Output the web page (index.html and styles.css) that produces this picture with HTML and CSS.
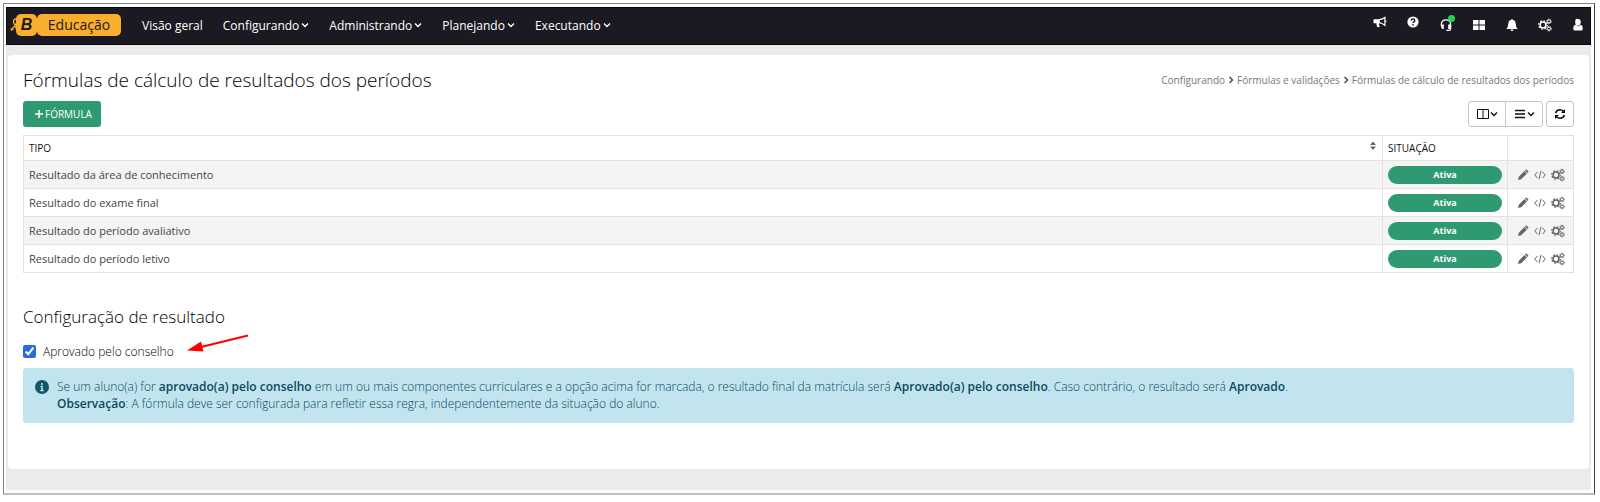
FILE: index.html
```
<!DOCTYPE html>
<html lang="pt-BR">
<head>
  <meta charset="utf-8">
  <title>Fórmulas de cálculo de resultados dos períodos</title>
  <link rel="stylesheet" href="styles.css">
</head>
<body>
  <!-- shared icons -->
  <svg class="sprite" aria-hidden="true">
    <symbol id="chevron" viewBox="0 0 8 8"><path d="M1 2.500l3 3 3-3" fill="none" stroke="currentColor" stroke-width="1.400"/></symbol>
    <symbol id="crumb" viewBox="0 0 8 8"><path d="M2.500 1l3 3-3 3" fill="none" stroke="currentColor" stroke-width="1.400"/></symbol>
    <symbol id="pencil" viewBox="0 0 12 12"><path d="M1 11l.8-3.200 5.700-5.700 2.400 2.400-5.700 5.700zM8 1.600l.8-.8q.5-.4 1 0l1.400 1.400q.4.500 0 1l-.8.800z" fill="currentColor"/></symbol>
    <symbol id="code" viewBox="0 0 12 12"><path d="M3.400 3L.7 6l2.700 3M8.600 3l2.700 3-2.700 3M7 1.800l-2 8.400" fill="none" stroke="currentColor"/></symbol>
    <symbol id="gears" viewBox="0 0 14 14">
      <g fill="none" stroke="currentColor">
        <circle cx="5" cy="7" r="2.900" stroke-width="1.500"/>
        <circle cx="5" cy="7" r="4.200" stroke-width="1.300" stroke-dasharray="1.600 1.700"/>
        <circle cx="11" cy="3.400" r="1.500"/>
        <circle cx="11" cy="3.400" r="2.300" stroke-dasharray="1 .8"/>
        <circle cx="11" cy="10.600" r="1.500"/>
        <circle cx="11" cy="10.600" r="2.300" stroke-dasharray="1 .8"/>
      </g>
    </symbol>
  </svg>

  <div class="frame">
    <header class="topbar">
      <a class="brand" href="#" aria-label="B Educação">
        <svg class="brand-ribbon" viewBox="0 0 10 14"><path d="M1 12.500L7.500 4Q8.600 1 6 1T3.500 4L7 12.500M.8 10.500l2.700 1.500" fill="none" stroke="#f9ae2c" stroke-width="1.300"/></svg>
        <span class="brand-letter">B</span>
        <span class="brand-name">Educação</span>
      </a>
      <nav class="menu">
        <a href="#">Visão geral</a>
        <a href="#">Configurando <svg class="icon-xs"><use href="#chevron"/></svg></a>
        <a href="#">Administrando <svg class="icon-xs"><use href="#chevron"/></svg></a>
        <a href="#">Planejando <svg class="icon-xs"><use href="#chevron"/></svg></a>
        <a href="#">Executando <svg class="icon-xs"><use href="#chevron"/></svg></a>
      </nav>
      <div class="tools">
        <button class="raised" aria-label="Novidades"><svg viewBox="0 0 14 14"><path d="M1.300 4.200h4.600Q9.500 4 12.500 1.300v10.200Q9.300 8.600 6 8.300q-.5 1.400.8 2.900-.3 1.200-2.400 1Q3.100 10 3.500 8.300H1.300Q.5 8.200.5 7.400V5q0-.8.8-.8z" fill="currentColor"/><path d="M6.800 5.200Q9.200 5 11.300 3.400v5.900Q9.200 7.700 6.800 7.300z" fill="#1b1a22"/><path d="M12.400 5.200q1.100.2 1.100 1.100t-1.100 1.100z" fill="currentColor"/></svg></button>
        <button class="raised" aria-label="Ajuda"><svg viewBox="0 0 14 14"><circle cx="7" cy="7" r="5.600" fill="currentColor"/><path d="M5.200 5.600Q5.300 4 7 4t1.800 1.500Q8.800 6.400 7.600 7 7 7.400 7 8.100M7 9v1.400" fill="none" stroke="#1b1a22" stroke-width="1.400"/></svg></button>
        <button class="support" aria-label="Suporte"><svg viewBox="0 0 14 16"><path d="M1.700 9V7Q2 2.200 7 2.200T12.300 7v5.200q0 2-2 2H7.500" fill="none" stroke="currentColor" stroke-width="1.400"/><path d="M2 7.500h2.500v5H3.200Q1.500 12.300 1.300 10zM9.500 7.500h2.700v5H9.500z" fill="currentColor"/></svg><span class="online"></span></button>
        <button aria-label="Aplicativos"><svg viewBox="0 0 14 14"><path d="M1 2h5.500v4.500H1zM7.500 2H13v4.500H7.500zM1 7.500h5.500V12H1zM7.500 7.500H13V12H7.500z" fill="currentColor"/></svg></button>
        <button aria-label="Notificações"><svg viewBox="0 0 14 14"><path d="M6.300 1.800q0-.9.700-.9t.7.900Q10.600 2.300 10.700 6q.1 3.300 2 5H1.300q1.900-1.700 2-5 .1-3.700 3-4.200zM5.400 11.500h3.200Q8.300 13 7 13t-1.600-1.500z" fill="currentColor"/></svg></button>
        <button aria-label="Configurações"><svg><use href="#gears"/></svg></button>
        <button aria-label="Usuário"><svg viewBox="0 0 14 14"><path d="M7 1q2.800 0 2.800 3T7 7.600 4.200 4 7 1zM4.300 6.800Q7 9.600 9.700 6.800q2 .5 2 4.200 0 1.500-1.500 1.500H3.800Q2.300 12.500 2.300 11q0-3.700 2-4.200z" fill="currentColor"/></svg></button>
      </div>
    </header>

    <main class="card">
      <div class="page-head">
        <h1>Fórmulas de cálculo de resultados dos períodos</h1>
        <nav class="breadcrumb">
          <a href="#">Configurando</a>
          <svg class="icon-xs"><use href="#crumb"/></svg>
          <a href="#">Fórmulas e validações</a>
          <svg class="icon-xs"><use href="#crumb"/></svg>
          <span>Fórmulas de cálculo de resultados dos períodos</span>
        </nav>
      </div>

      <div class="toolbar">
        <button class="btn-add"><svg viewBox="0 0 10 10"><path d="M5 1v8M1 5h8" stroke="currentColor" stroke-width="1.600"/></svg>FÓRMULA</button>
        <div class="toolbar-right">
          <div class="btn-group">
            <button aria-label="Colunas"><svg class="icon-sm" viewBox="0 0 12 12"><path d="M.5 1.500h11v9H.5zM6 1.500v9" fill="none" stroke="currentColor"/></svg><svg class="icon-xs"><use href="#chevron"/></svg></button>
            <button aria-label="Densidade"><svg class="icon-sm" viewBox="0 0 12 12"><path d="M1 2.500h10M1 6h10M1 9.500h10" stroke="currentColor" stroke-width="1.500"/></svg><svg class="icon-xs"><use href="#chevron"/></svg></button>
          </div>
          <button class="btn-refresh" aria-label="Atualizar"><svg class="icon-sm" viewBox="0 0 12 12"><path d="M1.600 5Q2.500 1.800 6 1.800q2 0 3.400 1.500M10.400 7Q9.500 10.200 6 10.200q-2 0-3.400-1.500" fill="none" stroke="currentColor" stroke-width="1.600"/><path d="M11 1v4H7zM1 11V7h4z" fill="currentColor"/></svg></button>
        </div>
      </div>

      <table class="grid">
        <thead>
          <tr>
            <th class="col-type"><div class="sortable">TIPO <svg viewBox="0 0 8 10"><path d="M4 .5L7 4H1zM4 9L1 5.500h6z" fill="currentColor"/></svg></div></th>
            <th class="col-status">SITUAÇÃO</th>
            <th class="col-actions" aria-label="Ações"></th>
          </tr>
        </thead>
        <tbody>
          <tr>
            <td>Resultado da área de conhecimento</td>
            <td><span class="badge">Ativa</span></td>
            <td><div class="actions"><button aria-label="Editar"><svg><use href="#pencil"/></svg></button><button aria-label="Código"><svg><use href="#code"/></svg></button><button aria-label="Configurar"><svg><use href="#gears"/></svg></button></div></td>
          </tr>
          <tr>
            <td>Resultado do exame final</td>
            <td><span class="badge">Ativa</span></td>
            <td><div class="actions"><button aria-label="Editar"><svg><use href="#pencil"/></svg></button><button aria-label="Código"><svg><use href="#code"/></svg></button><button aria-label="Configurar"><svg><use href="#gears"/></svg></button></div></td>
          </tr>
          <tr>
            <td>Resultado do período avaliativo</td>
            <td><span class="badge">Ativa</span></td>
            <td><div class="actions"><button aria-label="Editar"><svg><use href="#pencil"/></svg></button><button aria-label="Código"><svg><use href="#code"/></svg></button><button aria-label="Configurar"><svg><use href="#gears"/></svg></button></div></td>
          </tr>
          <tr>
            <td>Resultado do período letivo</td>
            <td><span class="badge">Ativa</span></td>
            <td><div class="actions"><button aria-label="Editar"><svg><use href="#pencil"/></svg></button><button aria-label="Código"><svg><use href="#code"/></svg></button><button aria-label="Configurar"><svg><use href="#gears"/></svg></button></div></td>
          </tr>
        </tbody>
      </table>

      <h2>Configuração de resultado</h2>
      <div class="option">
        <input type="checkbox" id="conselho" checked>
        <label for="conselho">Aprovado pelo conselho</label>
        <svg class="arrow" viewBox="0 0 62 20"><path d="M61 1.500L14 13" stroke="#f00" stroke-width="2"/><path d="M0 16.500L14 7.500l2.500 10z" fill="#f00"/></svg>
      </div>

      <div class="notice">
        <svg viewBox="0 0 14 14"><circle cx="7" cy="7" r="7" fill="#13566b"/><path d="M7 3v2M5.500 6.500H7v4M5.300 10.500h3.400" fill="none" stroke="#c1e4ef" stroke-width="1.500"/></svg>
        <p>Se um aluno(a) for <b>aprovado(a) pelo conselho</b> em um ou mais componentes curriculares e a opção acima for marcada, o resultado final da matrícula será <b>Aprovado(a) pelo conselho</b>. Caso contrário, o resultado será <b>Aprovado</b>.<br>
        <b>Observação</b>: A fórmula deve ser configurada para refletir essa regra, independentemente da situação do aluno.</p>
      </div>
    </main>
  </div>
</body>
</html>
```
FILE: styles.css
```
* {
  box-sizing: border-box;
}

body {
  margin: 0;
  padding: 3px 5px 7px 3px;
  font-family: "Open Sans", "Noto Sans", sans-serif;
  font-size: 12px;
  font-weight: 300;
  color: #000;
  background: #fff;
}

button {
  font: inherit;
  color: inherit;
  background: none;
  border: none;
  padding: 0;
  cursor: pointer;
}

a {
  color: inherit;
  text-decoration: none;
}

svg {
  display: block;
  flex: none;
}

.sprite {
  display: none;
}

.icon-xs {
  width: 8px;
  height: 8px;
}

.icon-sm {
  width: 12px;
  height: 12px;
}

.frame {
  border: 1px solid #858585;
  border-right-color: #444;
  border-bottom: 2px solid #bfbfbf;
  padding: 3px 3px 3px 2px;
  background: #ebebeb;
  background-clip: content-box;
}

/* top bar */
.topbar {
  display: flex;
  align-items: center;
  height: 38px;
  padding: 0 5px 2px 3px;
  margin-bottom: 10px;
  background: #1b1a22;
  border: 1px solid #08080c;
  color: #fff;
}

.brand {
  display: flex;
  align-items: center;
  color: #1b1a22;
}

.brand-ribbon {
  width: 10px;
  height: 14px;
  margin-right: -4px;
}

.brand-letter,
.brand-name {
  height: 22px;
  line-height: 22px;
  background: #f9ae2c;
  border-radius: 5px;
  text-align: center;
}

.brand-letter {
  width: 21px;
  font: italic bold 16px/22px "Liberation Sans", sans-serif;
}

.brand-name {
  width: 84px;
  font-size: 14px;
  font-weight: 500;
}

.menu {
  display: flex;
  gap: 20px;
  margin-left: 21px;
  font-size: 12px;
  font-weight: 500;
}

.menu a {
  display: flex;
  align-items: center;
  gap: 2px;
}

.tools {
  display: flex;
  align-items: center;
  gap: 19px;
  margin-left: auto;
}

.tools svg {
  width: 14px;
  height: 14px;
}

.tools .raised {
  padding-bottom: 7px;
}

.support {
  position: relative;
}

.online {
  position: absolute;
  top: -3px;
  right: -2px;
  width: 7px;
  height: 7px;
  border-radius: 50%;
  background: #22d34f;
}

/* content */
.card {
  margin: 0 2px 21px;
  padding: 11px 15px 46px;
  background: #fff;
  border-radius: 4px;
}

.page-head {
  display: flex;
  justify-content: space-between;
  align-items: center;
  height: 28px;
  margin-bottom: 7px;
}

h1,
h2 {
  margin: 0;
  font-weight: 300;
}

h1 {
  font-size: 19px;
}

h2 {
  margin: 32px 0 12px;
  font-size: 17px;
  line-height: 24px;
}

.breadcrumb {
  display: flex;
  align-items: center;
  gap: 2px;
  font-size: 10px;
  font-weight: 400;
  color: #777;
}

.breadcrumb svg {
  color: #444;
}

.toolbar {
  display: flex;
  justify-content: space-between;
  margin-bottom: 8px;
}

.btn-add {
  display: flex;
  align-items: center;
  gap: 1px;
  height: 26px;
  padding: 0 9px 0 11px;
  background: #2f9972;
  border-radius: 3px;
  color: #fff;
  font-size: 10px;
  font-weight: 400;
}

.btn-add svg {
  width: 10px;
  height: 10px;
}

.toolbar-right {
  display: flex;
  gap: 3px;
  color: #111;
}

.btn-group {
  display: flex;
}

.btn-group button,
.btn-refresh {
  display: flex;
  align-items: center;
  justify-content: center;
  gap: 1px;
  width: 38px;
  height: 26px;
  border: 1px solid #c4c4c4;
}

.btn-group button:first-child {
  border-radius: 3px 0 0 3px;
}

.btn-group button:last-child {
  margin-left: -1px;
  border-radius: 0 3px 3px 0;
}

.btn-refresh {
  width: 28px;
  border-radius: 3px;
}

.grid {
  width: 100%;
  border-collapse: collapse;
  table-layout: fixed;
  font-size: 11px;
  font-weight: 400;
  color: #444;
}

.grid th,
.grid td {
  height: 28px;
  padding: 0 5px;
  border: 1px solid #e2e2e2;
  text-align: left;
}

.grid th {
  height: 25px;
  font-size: 10px;
  font-weight: 400;
  color: #111;
}

.grid tbody tr:nth-child(odd) {
  background: #f4f4f4;
}

.grid .col-status {
  width: 125px;
}

.grid .col-actions {
  width: 66px;
}

.sortable {
  display: flex;
  justify-content: space-between;
}

.sortable svg {
  width: 8px;
  height: 10px;
  color: #666;
}

.badge {
  display: block;
  height: 18px;
  border-radius: 9px;
  background: #2f9972;
  color: #fff;
  font-size: 9px;
  font-weight: 700;
  line-height: 18px;
  text-align: center;
}

.actions {
  display: flex;
  align-items: center;
  gap: 5px;
  padding-left: 4px;
  color: #666;
}

.actions svg {
  width: 12px;
  height: 12px;
}

.actions button:last-child svg {
  width: 14px;
  height: 14px;
}

.option {
  display: flex;
  align-items: center;
  height: 20px;
  margin-bottom: 7px;
}

.option input {
  width: 13px;
  height: 13px;
  margin: 0 7px 0 0;
  accent-color: #2a6cdb;
}

.arrow {
  width: 62px;
  height: 20px;
  margin: -15px 0 0 13px;
}

.notice {
  display: flex;
  gap: 8px;
  padding: 10px 12px 11px;
  background: #c1e4ef;
  border-radius: 3px;
  color: #0c4a5e;
  line-height: 17px;
}

.notice svg {
  width: 14px;
  height: 14px;
  margin-top: 2px;
}

.notice p {
  margin: 0;
}

.notice b {
  font-weight: 600;
}
```
